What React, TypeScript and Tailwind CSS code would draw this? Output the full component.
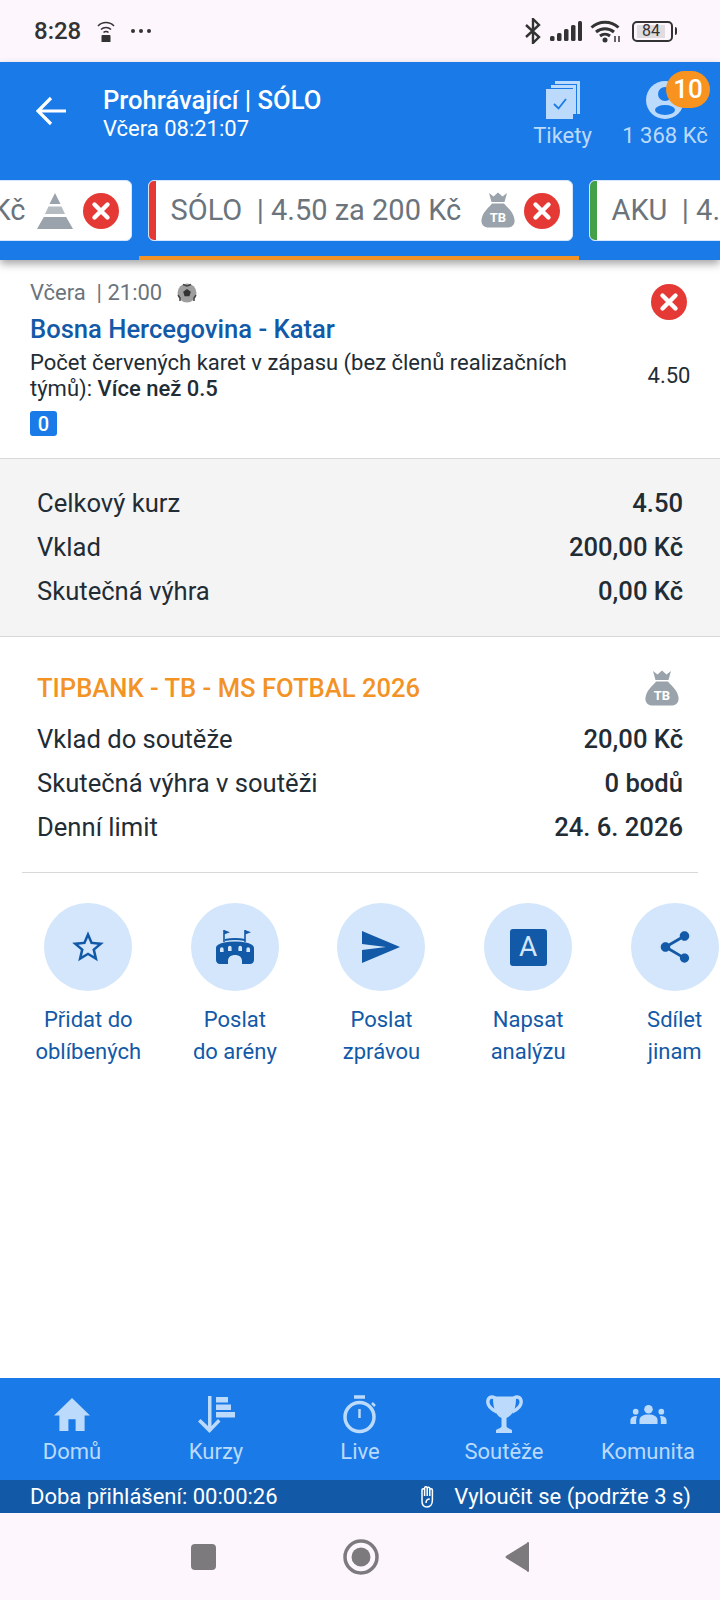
const font = { fontFamily: "Roboto, sans-serif" };

function CrossBadge({ size = 36 }: { size?: number }) {
  return (
    <svg width={size} height={size} viewBox="0 0 36 36" className="shrink-0">
      <circle cx="18" cy="18" r="18" fill="#e53935" />
      <path d="M11.5 11.5l13 13M24.5 11.5l-13 13" stroke="#fff" strokeWidth="4.4" strokeLinecap="round" />
    </svg>
  );
}

function BagIcon({ size = 34 }: { size?: number }) {
  return (
    <svg width={size} height={size * 1.06} viewBox="0 0 34 36" className="shrink-0">
      <path d="M8 1l4.500 3.500L17 .5l4.500 4L26 1l-2.500 9h-13z" fill="#9aa3ab" />
      <path d="M11 11.500h12c2 3 9.500 8 10.500 16 .6 5-2.500 8-7 8H7.500c-4.500 0-7.600-3-7-8C1.500 19.500 9 14.500 11 11.500z" fill="#9aa3ab" />
      <text x="17" y="30" textAnchor="middle" fontSize="13" fontWeight="700" fill="#fff" fontFamily="Roboto, sans-serif">TB</text>
    </svg>
  );
}

function PyramidIcon() {
  return (
    <svg width="36" height="36" viewBox="0 0 36 36" className="shrink-0">
      <path d="M18 0l5.500 11h-11z" fill="#9aa3ab" />
      <path d="M11.500 13.500h13l3.500 7.500H8z" fill="#b4bbc1" />
      <path d="M6.800 24h22.400L36 36H0z" fill="#9aa3ab" />
    </svg>
  );
}

function StatusBar() {
  return (
    <div className="flex h-[62px] items-center justify-between bg-[#fdf7fd] pr-[43px] pl-[34px] text-[#333]">
      <div className="flex items-center">
        <span className="text-[24px] leading-none font-medium">8:28</span>
        <svg width="20" height="24" viewBox="0 0 20 24" className="ml-[15px]">
          <path d="M2 7a11 11 0 0 1 16 0M5 10.500a7 7 0 0 1 10 0M7.500 13.500a3.500 3.500 0 0 1 5 0" fill="none" stroke="#333" strokeWidth="1.500" />
          <path d="M5.500 23v-6a1 1 0 0 1 1-1h7a1 1 0 0 1 1 1v6z" fill="#333" />
        </svg>
        <div className="ml-[15px] flex gap-[4px]">
          <span className="h-[4px] w-[4px] rounded-full bg-[#333]" />
          <span className="h-[4px] w-[4px] rounded-full bg-[#333]" />
          <span className="h-[4px] w-[4px] rounded-full bg-[#333]" />
        </div>
      </div>
      <div className="flex items-center">
        <svg width="18" height="26" viewBox="0 0 18 26">
          <path d="M2 7l13 12-6 6V1l6 6L2 19" fill="none" stroke="#333" strokeWidth="2.400" />
        </svg>
        <svg width="32" height="22" viewBox="0 0 32 22" className="ml-[8px]">
          <rect x="0" y="16" width="4.500" height="5" rx="1.500" fill="#333" />
          <rect x="7" y="13" width="4.500" height="8" rx="1.500" fill="#333" />
          <rect x="14" y="9" width="4.500" height="12" rx="1.500" fill="#333" />
          <rect x="21" y="5" width="4.500" height="16" rx="1.500" fill="#333" />
          <rect x="28" y="1" width="4" height="20" rx="1.500" fill="#333" />
        </svg>
        <svg width="32" height="24" viewBox="0 0 32 24" className="ml-[8px]">
          <path d="M1.500 8.500a20 20 0 0 1 27 0M6 13a14 14 0 0 1 18 0M10 17a8 8 0 0 1 10 0" fill="none" stroke="#333" strokeWidth="3" />
          <circle cx="15" cy="21" r="2.500" fill="#333" />
          <path d="M25 17v6M29 17v6" stroke="#333" strokeWidth="1.500" />
        </svg>
        <div className="ml-[10px] flex items-center">
          <div className="flex h-[21px] w-[41px] items-center rounded-[5px] border-2 border-[#333] px-[3px]">
            <div className="flex h-[13px] w-[28px] items-center justify-center bg-[#e0dce0] text-[16px] leading-none">84</div>
          </div>
          <div className="ml-[2px] h-[8px] w-[2px] rounded-r bg-[#333]" />
        </div>
      </div>
    </div>
  );
}

function Header() {
  return (
    <div className="relative z-10 h-[198px] bg-[#1a7ae8] shadow-[0_4px_8px_rgba(0,0,0,0.35)]">
      <div className="flex h-[118px]">
        <div className="flex w-[103px] shrink-0 items-start pt-[34px] pl-[36px]">
          <svg width="31" height="30" viewBox="0 0 31 30">
            <path d="M30 15H3M15 2L2 15l13 13" fill="none" stroke="#fff" strokeWidth="3.200" />
          </svg>
        </div>
        <div className="flex-1 pt-[24px] text-white">
          <div className="text-[25.6px] leading-[29px] font-medium">Prohrávající | SÓLO</div>
          <div className="text-[22px] leading-[27px]">Včera 08:21:07</div>
        </div>
        <div className="flex w-[79px] flex-col items-center pt-[19px] text-[#bbdafc]">
          <svg width="34" height="38" viewBox="0 0 34 38">
            <path d="M9 0h25v33h-3V3H9z" fill="#bbdafc" />
            <path d="M5 4h25v29h-3V7H5z" fill="#bbdafc" />
            <rect x="0" y="8" width="27" height="30" fill="#bbdafc" />
            <path d="M8 23l4.500 4.500L20 18" fill="none" stroke="#1a7ae8" strokeWidth="1.800" />
          </svg>
          <span className="mt-[4px] text-[22px] leading-[26px]">Tikety</span>
        </div>
        <div className="relative mr-[13px] ml-[21px] flex w-[84px] flex-col items-center pt-[19px] text-[#bbdafc]">
          <svg width="38" height="38" viewBox="0 0 38 38">
            <circle cx="19" cy="19" r="19" fill="#bbdafc" />
            <ellipse cx="19" cy="29" rx="10" ry="5" fill="#1a7ae8" />
            <circle cx="19" cy="13" r="7" fill="#1a7ae8" />
          </svg>
          <span className="mt-[4px] text-[22px] leading-[26px] whitespace-nowrap">1 368 Kč</span>
          <div className="absolute top-[9px] left-[43px] flex h-[37px] w-[44px] items-center justify-center rounded-full bg-[#f7931e] text-[26px] font-medium text-white">10</div>
        </div>
      </div>
      <div className="flex justify-center gap-[16px] overflow-hidden">
        <div className="flex h-[61px] w-[300px] shrink-0 items-center justify-end overflow-hidden rounded-[6px] border border-[#d3e6fb] bg-white pr-[12px]">
          <span className="text-[29px] whitespace-nowrap text-[#6b747c]">Kč</span>
          <div className="ml-[11px]"><PyramidIcon /></div>
          <div className="ml-[10px]"><CrossBadge /></div>
        </div>
        <div className="flex h-[61px] w-[425px] shrink-0 items-center overflow-hidden rounded-[6px] border border-[#d3e6fb] bg-white pr-[12px]">
          <div className="h-full w-[7px] bg-[#e53935]" />
          <span className="ml-[15px] flex-1 text-[29px] whitespace-nowrap text-[#6b747c]">SÓLO&nbsp; | 4.50 za 200 Kč</span>
          <BagIcon />
          <div className="ml-[9px]"><CrossBadge /></div>
        </div>
        <div className="flex h-[61px] w-[300px] shrink-0 items-center overflow-hidden rounded-[6px] border border-[#d3e6fb] bg-white">
          <div className="h-full w-[7px] shrink-0 bg-[#43a047]" />
          <span className="ml-[15px] text-[29px] whitespace-nowrap text-[#6b747c]">AKU&nbsp; | 4.</span>
        </div>
      </div>
      <div className="mt-[15px] ml-[139px] h-[4px] w-[440px] bg-[#f39325]" />
    </div>
  );
}

function BetRow() {
  return (
    <div className="flex h-[199px] border-b border-[#d8d8d8] pt-[20px] pr-[30px] pl-[30px]">
      <div className="flex-1">
        <div className="flex items-center text-[22px] leading-[26px] text-[#6b747c]">
          <span>Včera&nbsp; | 21:00</span>
          <svg width="20" height="20" viewBox="0 0 20 20" className="ml-[15px]">
            <circle cx="10" cy="10" r="9.500" fill="#9e9e9e" />
            <path d="M10 6l3.800 2.800-1.400 4.400H7.600L6.200 8.800z" fill="#333" />
            <path d="M6 1.500l4 1.500 4-1.500M1 12l2 3 0 3M19 12l-2 3 0 3" fill="none" stroke="#444" strokeWidth="1.500" />
          </svg>
        </div>
        <div className="mt-[10px] text-[25.6px] leading-[26px] font-medium text-[#1259a8]">Bosna Hercegovina - Katar</div>
        <div className="mt-[8px] w-[560px] text-[22px] leading-[26px] text-[#222c35]">
          Počet červených karet v zápasu (bez členů realizačních týmů): <span className="font-medium">Více než 0.5</span>
        </div>
        <div className="mt-[9px] flex h-[25px] w-[27px] items-center justify-center rounded-[3px] bg-[#1a7ae8] text-[20px] font-medium text-white">0</div>
      </div>
      <div className="flex w-[42px] flex-col items-center pt-[4px]">
        <CrossBadge />
        <span className="mt-[43px] text-[22px] leading-[26px] text-[#222c35]">4.50</span>
      </div>
    </div>
  );
}

function Row({ label, value }: { label: string; value: string }) {
  return (
    <div className="flex h-[44px] items-center justify-between text-[25.6px] text-[#222c35]">
      <span>{label}</span>
      <span className="font-medium">{value}</span>
    </div>
  );
}

function Action({ icon, top, bottom }: { icon: React.ReactNode; top: string; bottom: string }) {
  return (
    <div className="flex w-[146.6px] shrink-0 flex-col items-center">
      <div className="flex h-[88px] w-[88px] items-center justify-center rounded-full bg-[#d3e6fb]">{icon}</div>
      <div className="mt-[13px] text-center text-[22px] leading-[32px] whitespace-nowrap text-[#1259a8]">
        <div>{top}</div>
        <div>{bottom}</div>
      </div>
    </div>
  );
}

function NavItem({ icon, label }: { icon: React.ReactNode; label: string }) {
  return (
    <div className="flex flex-col items-center">
      <div className="flex h-[40px] items-center justify-center">{icon}</div>
      <span className="mt-[5px] text-[22px] leading-[26px]">{label}</span>
    </div>
  );
}

const blue = "#1259a8";
const light = "#bbdafc";

export default function App() {
  return (
    <div className="flex h-[1600px] w-[720px] flex-col overflow-hidden bg-white" style={font}>
      <StatusBar />
      <Header />
      <BetRow />
      <div className="h-[178px] border-b border-[#d8d8d8] bg-[#f4f4f4] pt-[22px] pr-[37px] pl-[37px]">
        <Row label="Celkový kurz" value="4.50" />
        <Row label="Vklad" value="200,00 Kč" />
        <Row label="Skutečná výhra" value="0,00 Kč" />
      </div>
      <div className="mx-[22px] h-[236px] border-b border-[#d8d8d8] px-[15px] pt-[31px]">
        <div className="flex h-[40px] items-center justify-between">
          <span className="text-[25.6px] font-medium text-[#f39325]">TIPBANK - TB - MS FOTBAL 2026</span>
          <div className="mr-[4px]"><BagIcon /></div>
        </div>
        <div className="mt-[9px]">
          <Row label="Vklad do soutěže" value="20,00 Kč" />
          <Row label="Skutečná výhra v soutěži" value="0 bodů" />
          <Row label="Denní limit" value="24. 6. 2026" />
        </div>
      </div>
      <div className="flex pt-[30px] pl-[15px]">
        <Action
          top="Přidat do"
          bottom="oblíbených"
          icon={
            <svg width="38" height="38" viewBox="0 0 24 24" fill={blue}>
              <path d="M22 9.240l-7.190-.62L12 2 9.190 8.630 2 9.240l5.460 4.730L5.820 21 12 17.270 18.180 21l-1.630-7.030L22 9.240zM12 15.400l-3.760 2.270 1-4.280-3.320-2.880 4.380-.38L12 6.100l1.710 4.040 4.380.38-3.320 2.880 1 4.280L12 15.400z" />
            </svg>
          }
        />
        <Action
          top="Poslat"
          bottom="do arény"
          icon={
            <svg width="38" height="34" viewBox="0 0 38 34" fill={blue}>
              <path d="M8 0v12M29 0v12" stroke={blue} strokeWidth="1.600" />
              <path d="M8 0l6 2.200-6 2.200zM29 0l6 2.200-6 2.200z" />
              <path d="M9 10c6-1.200 14-1.200 20 0" fill="none" stroke={blue} strokeWidth="2" />
              <path d="M0 18c0-3 4-4.500 8-5.500 7-1.300 15-1.300 22 0 4 1 8 2.500 8 5.500v12c0 2-1.500 4-4 4h-8v-3c0-4-3-6-7-6s-7 2-7 6v3H4c-2.500 0-4-2-4-4z" />
              <path d="M4 22v-3a1.800 1.800 0 0 1 3.600 0v3zM12 21v-3.500a1.800 1.800 0 0 1 3.600 0V21zM22.400 21v-3.500a1.800 1.800 0 0 1 3.600 0V21zM30.400 22v-3a1.800 1.800 0 0 1 3.600 0v3z" fill="#d3e6fb" />
            </svg>
          }
        />
        <Action
          top="Poslat"
          bottom="zprávou"
          icon={
            <svg width="38" height="32" viewBox="0 0 38 32" fill={blue}>
              <path d="M0 0l38 16L0 32V19l24-3-24-3z" />
            </svg>
          }
        />
        <Action
          top="Napsat"
          bottom="analýzu"
          icon={
            <div className="flex h-[37px] w-[37px] items-center justify-center rounded-[3px] bg-[#1259a8] text-[28px] text-[#d3e6fb]">A</div>
          }
        />
        <Action
          top="Sdílet"
          bottom="jinam"
          icon={
            <svg width="38" height="42" viewBox="0 0 24 24" fill={blue}>
              <path d="M18 16.080c-.76 0-1.440.3-1.960.77L8.910 12.700c.05-.23.090-.46.090-.7s-.04-.47-.09-.7l7.050-4.110c.54.5 1.250.81 2.040.81 1.660 0 3-1.340 3-3s-1.340-3-3-3-3 1.340-3 3c0 .24.040.47.090.7L8.040 9.810C7.500 9.310 6.790 9 6 9c-1.660 0-3 1.340-3 3s1.340 3 3 3c.79 0 1.500-.31 2.040-.81l7.120 4.160c-.05.21-.08.43-.08.65 0 1.610 1.310 2.920 2.920 2.920s2.920-1.310 2.920-2.920-1.310-2.920-2.920-2.920z" />
            </svg>
          }
        />
      </div>
      <div className="flex-1" />
      <div className="grid h-[102px] grid-cols-5 bg-[#1a7ae8] pt-[16px] text-[#bbdafc]">
        <NavItem
          label="Domů"
          icon={
            <svg width="36" height="33" viewBox="2 3 20 17" fill={light} preserveAspectRatio="none">
              <path d="M10 20v-6h4v6h5v-8h3L12 3 2 12h3v8z" />
            </svg>
          }
        />
        <NavItem
          label="Kurzy"
          icon={
            <svg width="37" height="37" viewBox="0 0 37 37" fill={light}>
              <path d="M10 0h3.500v30l6.500-7 2.500 2.500L11.500 37 0 25.500 2.500 23l7.500 7z" />
              <rect x="18" y="1" width="12" height="5.500" />
              <rect x="18" y="8.500" width="15" height="5.500" />
              <rect x="18" y="16" width="19" height="5.500" />
            </svg>
          }
        />
        <NavItem
          label="Live"
          icon={
            <svg width="36" height="39" viewBox="0 0 36 39" fill="none" stroke={light}>
              <path d="M12 2h11" strokeWidth="3.500" />
              <circle cx="17.500" cy="22" r="14.500" strokeWidth="3.500" />
              <path d="M17.500 14v9" strokeWidth="2.500" />
              <path d="M30 8l3 3" strokeWidth="2.500" />
            </svg>
          }
        />
        <NavItem
          label="Soutěže"
          icon={
            <svg width="37" height="38" viewBox="0 0 37 38" fill={light}>
              <path d="M9 3C5 .5 1.800 3 1.800 7c0 5 5 8 9 10M28 3c4-2.500 7.200 0 7.200 4 0 5-5 8-9 10" fill="none" stroke={light} strokeWidth="3.400" />
              <path d="M7 1.500h23c0 3 0 7-1 11-1 5-5 9-8.500 10.500v8c0 2 3 2.500 5.500 4v3H10v-3c2.500-1.500 5.500-2 5.500-4v-8C12 21.500 9 17.500 8 12.500c-1-4-1-8-1-11z" />
            </svg>
          }
        />
        <NavItem
          label="Komunita"
          icon={
            <svg width="37" height="19" viewBox="0 0 38 20" fill={light}>
              <circle cx="19" cy="4.500" r="4.500" />
              <circle cx="5.500" cy="7" r="3" />
              <circle cx="32.500" cy="7" r="3" />
              <path d="M9.500 20v-4c0-4 4-6 9.500-6s9.500 2 9.500 6v4z" />
              <path d="M0 20v-4c0-3 3-4.500 7-4.500-.7 1.500-1 3-1 5V20zM38 20v-4c0-3-3-4.500-7-4.500.7 1.500 1 3 1 5V20z" />
            </svg>
          }
        />
      </div>
      <div className="flex h-[33px] items-center justify-between bg-[#1259a8] pr-[29px] pl-[30px] text-[22px] text-white">
        <span>Doba přihlášení: 00:00:26</span>
        <span className="flex items-center gap-[18px]">
          <svg width="17" height="22" viewBox="3.500 1 14 22" fill="none" stroke="#fff" strokeWidth="1.500">
            <path d="M5 13V5a1.300 1.300 0 0 1 2.600 0v6M7.600 11V3a1.300 1.300 0 0 1 2.600 0v8M10.200 11V3.500a1.300 1.300 0 0 1 2.600 0V11M12.800 11V5a1.300 1.300 0 0 1 2.600 0v10c0 4-2 7-5.500 7S5 20 5 16v-3" />
            <path d="M9 18c0-2.500 1.500-4 3.800-4" />
          </svg>
          Vyloučit se (podržte 3 s)
        </span>
      </div>
      <div className="flex h-[87px] items-center justify-center bg-[#fdf7fd]">
        <div className="h-[26px] w-[25px] rounded-[4px] bg-[#7d7a7d]" />
        <svg width="36" height="36" viewBox="0 0 36 36" className="ml-[127px]">
          <circle cx="18" cy="18" r="16" fill="none" stroke="#7d7a7d" strokeWidth="3.500" />
          <circle cx="18" cy="18" r="9.500" fill="#7d7a7d" />
        </svg>
        <svg width="24" height="30" viewBox="0 0 24 30" className="ml-[126px]">
          <path d="M24 1v28a1 1 0 0 1-2 0L1 16a1.500 1.500 0 0 1 0-2L22 1a1 1 0 0 1 2 0z" fill="#7d7a7d" />
        </svg>
      </div>
    </div>
  );
}
